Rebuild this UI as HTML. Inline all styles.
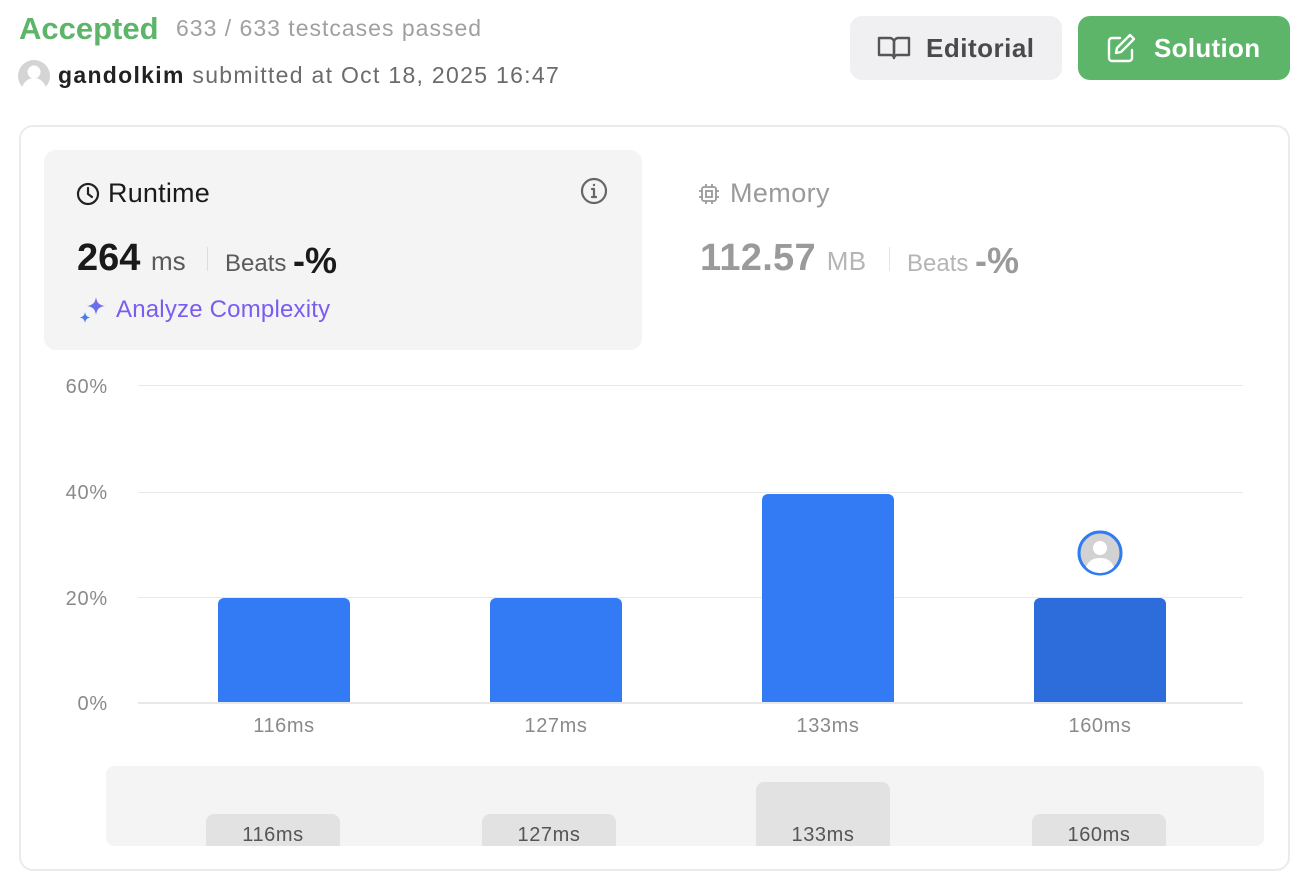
<!DOCTYPE html>
<html><head><meta charset="utf-8"><style>
*{margin:0;padding:0;box-sizing:border-box}
body{width:1308px;height:880px;background:#fff;font-family:"Liberation Sans",sans-serif;position:relative;overflow:hidden}
.a{position:absolute;white-space:nowrap}
.grid{position:absolute;left:138px;width:1105px;height:1px;background:#e8e8e8}
.yl{position:absolute;width:70px;left:38px;text-align:right;font-size:20px;letter-spacing:0.8px;color:#8a8a8a}
.bar{position:absolute;width:132px;background:#337af5;border-radius:6px 6px 0 0}
.xl{position:absolute;width:132px;text-align:center;font-size:20px;letter-spacing:0.6px;color:#8a8a8a;top:715px}
.mb{position:absolute;width:134px;background:#e2e2e2;border-radius:8px 8px 0 0;font-size:20px;letter-spacing:0.6px;color:#555;text-align:center}
</style></head><body>
<div class="a" style="left:19px;top:11px;font-size:31px;font-weight:bold;color:#5cb568">Accepted</div>
<div class="a" style="left:176px;top:15px;font-size:23px;letter-spacing:1px;color:#a0a0a0">633 / 633 testcases passed</div>
<svg class="a" style="left:18px;top:60px" width="32" height="32" viewBox="0 0 32 32"><circle cx="16" cy="16" r="16" fill="#d4d4d4"/><circle cx="16" cy="12" r="6.5" fill="#fff"/><path d="M4 27c3-7 8-9 12-9s9 2 12 9a16 16 0 0 1-24 0z" fill="#fff"/></svg>
<div class="a" style="left:58px;top:62px;font-size:23px;color:#222;font-weight:bold;letter-spacing:1.3px">gandolkim <span style="font-weight:normal;color:#6b6b6b">submitted at Oct 18, 2025 16:47</span></div>

<div class="a" style="left:850px;top:16px;width:212px;height:64px;background:#f0f0f2;border-radius:12px"></div>
<svg class="a" style="left:877px;top:34px" width="34" height="28" viewBox="0 0 34 28" fill="none" stroke="#555" stroke-width="2.4" stroke-linejoin="round"><path d="M2 4h11c2 0 4 2 4 4v16c0-1.5-1.5-3-3-3H2z"/><path d="M32 4H21c-2 0-4 2-4 4v16c0-1.5 1.5-3 3-3h12z"/></svg>
<div class="a" style="left:926px;top:33px;font-size:26px;color:#4a4a4a;font-weight:bold;letter-spacing:0.5px">Editorial</div>
<div class="a" style="left:1078px;top:16px;width:212px;height:64px;background:#5cb568;border-radius:12px"></div>
<svg class="a" style="left:1107px;top:33px" width="30" height="30" viewBox="0 0 30 30" fill="none" stroke="#fff" stroke-width="2.4" stroke-linecap="round" stroke-linejoin="round"><path d="M13 5H5a3 3 0 0 0-3 3v17a3 3 0 0 0 3 3h17a3 3 0 0 0 3-3v-8"/><path d="M23 2l4 4-13 13-5 1 1-5z"/></svg>
<div class="a" style="left:1154px;top:33px;font-size:26px;color:#fff;font-weight:bold;letter-spacing:0.3px">Solution</div>

<div class="a" style="left:19px;top:125px;width:1271px;height:746px;border:2px solid #ebebeb;border-radius:14px"></div>
<div class="a" style="left:44px;top:150px;width:598px;height:200px;background:#f4f4f4;border-radius:12px"></div>
<svg class="a" style="left:76px;top:182px" width="24" height="24" viewBox="0 0 24 24" fill="none" stroke="#222" stroke-width="2.2" stroke-linecap="round"><circle cx="12" cy="12" r="10"/><path d="M12 6v6l4 3"/></svg>
<div class="a" style="left:108px;top:178px;font-size:27px;letter-spacing:0.2px;color:#1a1a1a">Runtime</div>
<svg class="a" style="left:580px;top:177px" width="28" height="28" viewBox="0 0 28 28" fill="none" stroke="#666" stroke-width="2.2"><circle cx="14" cy="14" r="12"/><path d="M14 12v8M12 20h4M12 12h2" stroke-linecap="round"/><circle cx="14" cy="8" r="1.2" fill="#666" stroke="none"/></svg>
<div class="a" style="left:77px;top:237px;font-size:38px;font-weight:bold;color:#1a1a1a">264 <span style="font-size:26px;font-weight:normal;color:#5a5a5a">ms</span></div>
<div class="a" style="left:207px;top:247px;width:1px;height:24px;background:#ddd"></div>
<div class="a" style="left:225px;top:238px;font-size:24px;color:#5a5a5a">Beats <span style="font-size:36px;font-weight:bold;color:#1a1a1a;position:relative;top:2px">-%</span></div>
<svg class="a" style="left:78px;top:296px" width="30" height="30" viewBox="0 0 30 30"><defs><linearGradient id="g" x1="0" y1="1" x2="1" y2="0"><stop offset="0" stop-color="#3b82f6"/><stop offset="1" stop-color="#9b5de5"/></linearGradient></defs><path d="M18 1c1 6 3 8 9 9-6 1-8 3-9 9-1-6-3-8-9-9 6-1 8-3 9-9z" fill="url(#g)"/><path d="M7 16c.6 3.5 2 5 5.5 5.5C9 22 7.6 23.5 7 27c-.6-3.5-2-5-5.5-5.5C5 21 6.4 19.5 7 16z" fill="#4a7cf0"/></svg>
<div class="a" style="left:116px;top:296px;font-size:24px;letter-spacing:0.2px;color:#7a5cf0">Analyze Complexity</div>

<svg class="a" style="left:698px;top:183px" width="22" height="22" viewBox="0 0 22 22" fill="none" stroke="#999" stroke-width="1.8"><rect x="4" y="4" width="14" height="14" rx="2"/><rect x="8" y="8" width="6" height="6"/><path d="M8 1v3M14 1v3M8 18v3M14 18v3M1 8h3M1 14h3M18 8h3M18 14h3"/></svg>
<div class="a" style="left:730px;top:178px;font-size:27px;letter-spacing:0.4px;color:#9a9a9a">Memory</div>
<div class="a" style="left:700px;top:237px;font-size:38px;font-weight:bold;letter-spacing:0.3px;color:#9a9a9a">112.57 <span style="font-size:26px;font-weight:normal;color:#b5b5b5">MB</span></div>
<div class="a" style="left:889px;top:247px;width:1px;height:24px;background:#e5e5e5"></div>
<div class="a" style="left:907px;top:238px;font-size:24px;color:#b5b5b5">Beats <span style="font-size:36px;font-weight:bold;color:#9a9a9a;position:relative;top:2px">-%</span></div>

<div class="grid" style="top:385px"></div><div class="grid" style="top:492px"></div><div class="grid" style="top:597px"></div><div class="grid" style="top:702px;height:2px"></div>
<div class="yl" style="top:376px">60%</div><div class="yl" style="top:482px">40%</div><div class="yl" style="top:588px">20%</div><div class="yl" style="top:693px">0%</div>
<div class="bar" style="left:218px;top:598px;height:104px"></div>
<div class="bar" style="left:490px;top:598px;height:104px"></div>
<div class="bar" style="left:762px;top:494px;height:208px"></div>
<div class="bar" style="left:1034px;top:598px;height:104px;background:#2d6cdb"></div>
<svg class="a" style="left:1076px;top:529px" width="48" height="48" viewBox="0 0 48 48"><circle cx="24" cy="24" r="21" fill="#d2d2d2" stroke="#2f7bf0" stroke-width="3"/><circle cx="24" cy="19" r="7" fill="#fff"/><path d="M10 38c3-7 8-9 14-9s11 2 14 9a19 19 0 0 1-28 0z" fill="#fff"/></svg>
<div class="xl" style="left:218px">116ms</div><div class="xl" style="left:490px">127ms</div><div class="xl" style="left:762px">133ms</div><div class="xl" style="left:1034px">160ms</div>

<div class="a" style="left:106px;top:766px;width:1158px;height:80px;background:#f4f4f4;border-radius:8px;overflow:hidden">
<div class="mb" style="left:100px;top:48px;height:40px;padding-top:10px">116ms</div>
<div class="mb" style="left:376px;top:48px;height:40px;padding-top:10px">127ms</div>
<div class="mb" style="left:650px;top:16px;height:72px;padding-top:42px">133ms</div>
<div class="mb" style="left:926px;top:48px;height:40px;padding-top:10px">160ms</div>
</div>
</body></html>
